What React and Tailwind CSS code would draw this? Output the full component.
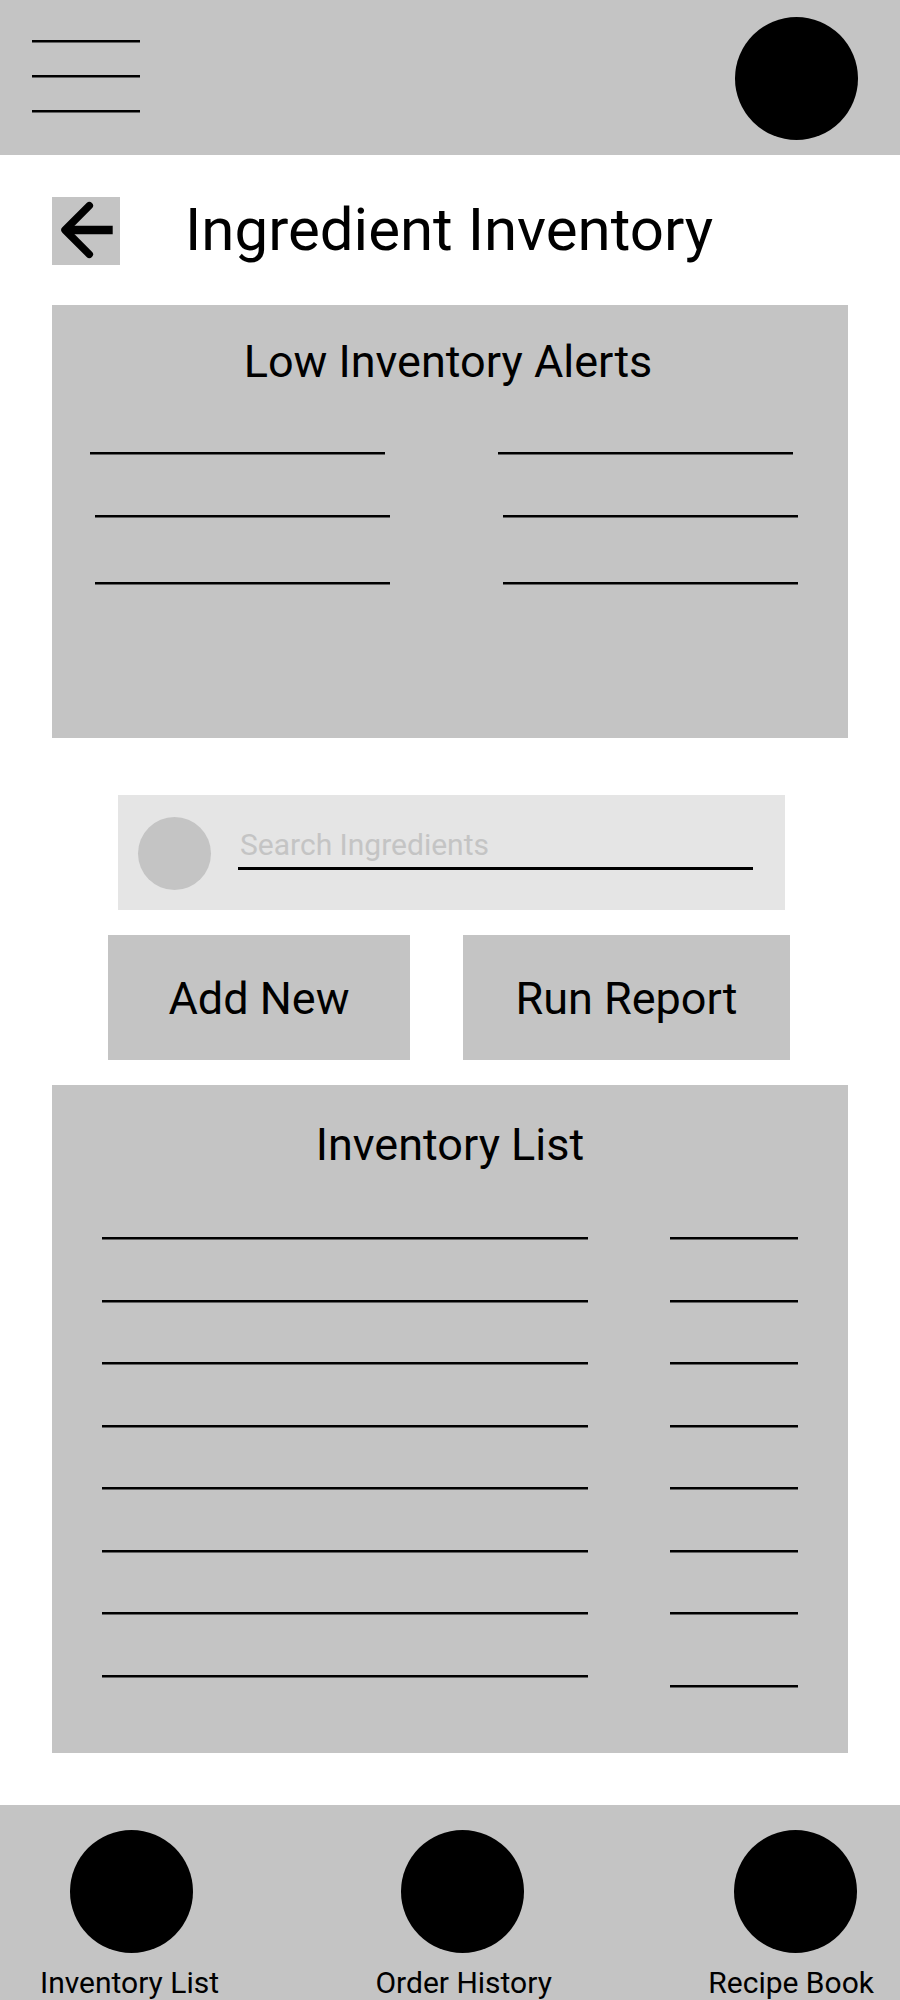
const navItems = [
  { label: "Inventory List", indent: "ml-[30px]" },
  { label: "Order History", indent: "ml-[26px]" },
  { label: "Recipe Book", indent: "ml-[26px]" },
];

const inventoryRows = [1, 2, 3, 4, 5, 6, 7];

function Rule({ className = "" }) {
  return <span className={`block h-[3px] border-b border-[#626262] bg-black ${className}`} />;
}

function AlertRow({ className }) {
  return (
    <li className={`grid grid-cols-2 gap-[113px] ${className}`}>
      <Rule />
      <Rule />
    </li>
  );
}

function Header() {
  return (
    <header className="flex items-start justify-between bg-[#c4c4c4] pt-[17px] pr-[42px] pb-[15px] pl-[32px]">
      <button type="button" aria-label="Menu" className="mt-[23px] flex w-[108px] flex-col gap-8">
        <Rule className="w-full" />
        <Rule className="w-full" />
        <Rule className="w-full" />
      </button>
      <button type="button" aria-label="Profile" className="size-[123px] rounded-full bg-black" />
    </header>
  );
}

function BackArrow() {
  return (
    <svg viewBox="0 0 68 68" className="size-full" fill="none" stroke="#000" aria-hidden="true">
      <path d="M37.3 8.7 13 33l24.3 24.3" strokeWidth="7.5" strokeLinecap="round" strokeLinejoin="round" />
      <path d="M13 33h47.7" strokeWidth="8.5" />
    </svg>
  );
}

export default function App() {
  return (
    <div className="bg-white font-['Roboto',sans-serif] text-black">
      <Header />

      <main className="px-[52px] pt-[42px] pb-[52px]">
        <div className="flex items-center gap-[65px]">
          <a href="#back" aria-label="Back" className="block size-[68px] shrink-0 bg-[#c4c4c4]">
            <BackArrow />
          </a>
          <h1 className="pb-0.5 text-[60px] leading-[64px]">Ingredient Inventory</h1>
        </div>

        <section className="mt-10 bg-[#c4c4c4] pt-[30px] pb-[153px]">
          <h2 className="pr-1 text-center text-[45px] leading-[54px]">Low Inventory Alerts</h2>
          <ul className="mt-[63px]">
            <AlertRow className="pr-[55px] pl-[38px]" />
            <AlertRow className="mt-[60px] pr-[50px] pl-[43px]" />
            <AlertRow className="mt-[64px] pr-[50px] pl-[43px]" />
          </ul>
        </section>

        <form
          role="search"
          className="mt-[57px] mr-[63px] ml-[66px] flex items-start gap-[27px] bg-[#e5e5e5] pt-[22px] pr-[32px] pb-[20px] pl-[20px]"
        >
          <button type="submit" aria-label="Search" className="size-[73px] shrink-0 rounded-full bg-[#c4c4c4]" />
          <input
            type="text"
            aria-label="Search Ingredients"
            placeholder="Search Ingredients"
            className="mt-[10px] h-[43px] min-w-0 flex-1 border-b-[3px] border-black bg-transparent pb-[5px] pl-[2px] text-[30px] leading-[35px] outline-none placeholder:text-[#c4c4c4]"
          />
        </form>

        <div className="mt-[25px] mr-[58px] ml-[56px] grid grid-cols-[302fr_327fr] gap-[53px]">
          <button type="button" className="bg-[#c4c4c4] pt-[37px] pb-[34px] text-[45px] leading-[54px]">
            Add New
          </button>
          <button type="button" className="bg-[#c4c4c4] pt-[37px] pb-[34px] text-[45px] leading-[54px]">
            Run Report
          </button>
        </div>

        <section className="mt-[25px] bg-[#c4c4c4] px-[50px] pt-[33px] pb-[65px]">
          <h2 className="text-center text-[45px] leading-[54px]">Inventory List</h2>
          <ul className="mt-[65px]">
            {inventoryRows.map((row) => (
              <li key={row} className="flex gap-[82px] odd:h-[63px] even:h-[62px]">
                <Rule className="flex-1" />
                <Rule className="w-[128px]" />
              </li>
            ))}
            <li className="flex h-[13px] gap-[82px]">
              <Rule className="flex-1" />
              <Rule className="w-[128px] self-end" />
            </li>
          </ul>
        </section>
      </main>

      <nav className="flex justify-between bg-[#c4c4c4] pt-[25px] pr-[26px] pl-[40px]">
        {navItems.map(({ label, indent }) => (
          <a key={label} href="#nav" className="flex flex-col items-start gap-3">
            <span className={`size-[123px] rounded-full bg-black ${indent}`} />
            <span className="text-[30px] leading-[35px] whitespace-nowrap">{label}</span>
          </a>
        ))}
      </nav>
    </div>
  );
}
